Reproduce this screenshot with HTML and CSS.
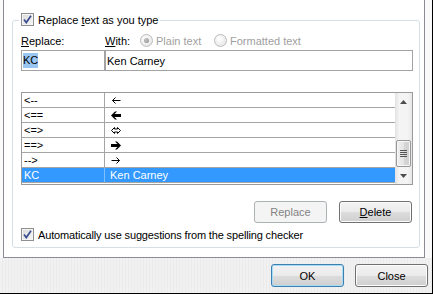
FILE: index.html
```html
<!DOCTYPE html>
<html lang="en">
<head>
  <meta charset="UTF-8">
  <title>AutoCorrect</title>
  <link rel="stylesheet" href="styles.css">
</head>
<body>
<div class="tab-page">
  <div class="group">
    <div class="group-title">
      <span class="check"><svg width="9" height="9" viewBox="0 0 9 9"><path d="M1 4.5L3.3 7.6L8 0.8" fill="none" stroke="#3b4d91" stroke-width="1.7"/></svg></span>
      <span>Replace <u>t</u>ext as you type</span>
    </div>
    <div class="labels">
      <span class="lbl-key"><u>R</u>eplace:</span>
      <span class="lbl-with"><u>W</u>ith:</span>
      <span class="option opt-plain"><span class="radio on"></span>Plain text</span>
      <span class="option"><span class="radio"></span>Formatted text</span>
    </div>
    <div class="fields">
      <div class="field field-key"><span class="sel">KC</span></div>
      <div class="field field-val">Ken Carney</div>
    </div>
    <div class="list">
      <div class="rows">
        <div class="row"><span class="c1">&lt;--</span><span class="c2"><svg width="10" height="9" viewBox="0 0 10 9"><path d="M1.5 4.5H9.5M4.5 1.5L1.5 4.5L4.5 7.5" fill="none" stroke="#000"/></svg></span></div>
        <div class="row"><span class="c1">&lt;==</span><span class="c2"><svg width="10" height="9" viewBox="0 0 10 9"><polygon points="0,4.5 4,0.5 6,0.5 3.5,3 10,3 10,6 3.5,6 6,8.5 4,8.5" fill="#000"/></svg></span></div>
        <div class="row"><span class="c1">&lt;=&gt;</span><span class="c2"><svg width="10" height="9" viewBox="0 0 10 9"><polygon points="0.5,4.5 3.5,1.5 3.5,3 6.5,3 6.5,1.5 9.5,4.5 6.5,7.5 6.5,6 3.5,6 3.5,7.5" fill="#fff" stroke="#000"/></svg></span></div>
        <div class="row"><span class="c1">==&gt;</span><span class="c2"><svg width="10" height="9" viewBox="0 0 10 9"><polygon points="10,4.5 6,0.5 4,0.5 6.5,3 0,3 0,6 6.5,6 4,8.5 6,8.5" fill="#000"/></svg></span></div>
        <div class="row"><span class="c1">--&gt;</span><span class="c2"><svg width="10" height="9" viewBox="0 0 10 9"><path d="M0.5 4.5H8.5M5.5 1.5L8.5 4.5L5.5 7.5" fill="none" stroke="#000"/></svg></span></div>
        <div class="row selected"><span class="c1">KC</span><span class="c2">Ken Carney</span></div>
      </div>
      <div class="scroll">
        <div class="scroll-btn"><svg width="7" height="4" viewBox="0 0 7 4"><polygon points="0,4 3.5,0 7,4" fill="#4d4d4d"/></svg></div>
        <div class="track">
          <div class="thumb"><span></span><span></span><span></span><span></span></div>
        </div>
        <div class="scroll-btn"><svg width="7" height="4" viewBox="0 0 7 4"><polygon points="0,0 3.5,4 7,0" fill="#4d4d4d"/></svg></div>
      </div>
    </div>
    <div class="actions">
      <button class="btn" disabled>Replace</button>
      <button class="btn"><u>D</u>elete</button>
    </div>
    <div class="auto">
      <span class="check"><svg width="9" height="9" viewBox="0 0 9 9"><path d="M1 4.5L3.3 7.6L8 0.8" fill="none" stroke="#3b4d91" stroke-width="1.7"/></svg></span>
      <span class="auto-text">Automatically use su<u>g</u>gestions from the spelling checker</span>
    </div>
  </div>
</div>
<div class="footer">
  <button class="btn default">OK</button>
  <button class="btn">Close</button>
</div>
</body>
</html>
```
FILE: styles.css
```css
body {
	margin: 0;
	width: 433px;
	height: 294px;
	box-sizing: border-box;
	border-right: 1px solid #000;
	border-bottom: 1px solid #000;
	background: #fafafa;
	font: 11px "Liberation Sans", Arial, sans-serif;
	color: #000;
	overflow: hidden;
}
u {
	text-decoration: underline;
	text-underline-offset: 1px;
}
.tab-page {
	margin-left: 3px;
	width: 422px;
	height: 258px;
	box-sizing: border-box;
	border: 1px solid #898c95;
	border-top: none;
	background: #fff;
	padding: 20px 4px 0 8px;
}
.group {
	height: 228px;
	box-sizing: border-box;
	border: 1px solid #d5dfe5;
	border-radius: 3px;
	padding: 0 6px 0 8px;
}
.group-title {
	display: flex;
	align-items: center;
	width: max-content;
	height: 13px;
	margin: -8px 0 0 -2px;
	padding: 0 2px;
	background: #fff;
}
.check {
	display: flex;
	align-items: center;
	justify-content: center;
	width: 13px;
	height: 13px;
	box-sizing: border-box;
	margin-right: 4px;
	border: 1px solid #8f8f8f;
	background: linear-gradient(135deg, #d9d9d9, #f8f8f8);
	box-shadow: inset 0 0 0 1px #f4f4f4;
}
.labels {
	display: flex;
	align-items: center;
	height: 13px;
	margin-top: 8px;
}
.lbl-key {
	width: 84px;
}
.lbl-with {
	width: 35px;
}
.option {
	display: flex;
	align-items: center;
	color: #a0a0a0;
}
.opt-plain {
	width: 74px;
}
.radio {
	position: relative;
	width: 13px;
	height: 13px;
	box-sizing: border-box;
	margin-right: 3px;
	border: 1px solid #bcbcbc;
	border-radius: 50%;
	background: radial-gradient(circle at 40% 35%, #fff, #e0e0e0);
}
.radio.on::after {
	content: "";
	position: absolute;
	left: 3px;
	top: 3px;
	width: 5px;
	height: 5px;
	border-radius: 50%;
	background: radial-gradient(circle at 40% 35%, #c4c4c4, #8c8c8c);
}
.fields {
	display: flex;
	margin-top: 3px;
}
.field {
	display: flex;
	align-items: center;
	height: 21px;
	box-sizing: border-box;
	padding-left: 1px;
	border: 1px solid #a3a3a3;
}
.field-key {
	width: 84px;
}
.field-val {
	width: 308px;
}
.sel {
	line-height: 15px;
	background: #99c6f0;
}
.list {
	display: flex;
	height: 93px;
	box-sizing: border-box;
	margin-top: 21px;
	border: 1px solid #9b9b9b;
}
.rows {
	flex: 1;
}
.row {
	display: flex;
	height: 15px;
	box-sizing: border-box;
	border-bottom: 1px solid #a5a5a5;
	line-height: 14px;
}
.c1 {
	width: 83px;
	box-sizing: border-box;
	padding-left: 2px;
	border-right: 1px solid #a5a5a5;
}
.c2 {
	display: flex;
	align-items: center;
	padding-left: 6px;
}
.row.selected {
	background: #3399ff;
	color: #fff;
}
.row.selected .c1 {
	border-right-color: #80bfff;
}
.row.selected .c2 {
	padding-left: 5px;
}
.scroll {
	display: flex;
	flex-direction: column;
	width: 17px;
	background: linear-gradient(to right, #e2e2e2, #f4f4f4 25%, #f4f4f4 75%, #e6e6e6);
}
.scroll-btn {
	display: flex;
	align-items: center;
	justify-content: center;
	height: 17px;
}
.track {
	flex: 1;
	display: flex;
	flex-direction: column;
	justify-content: flex-end;
	padding: 0 1px;
}
.thumb {
	display: flex;
	flex-direction: column;
	align-items: center;
	justify-content: center;
	gap: 1px;
	height: 27px;
	box-sizing: border-box;
	border: 1px solid #979797;
	border-radius: 2px;
	background: linear-gradient(to right, #f1f1f1, #e4e4e4 50%, #d7d7d7 51%, #cfcfcf);
	box-shadow: inset 0 0 0 1px #f8f8f8;
}
.thumb span {
	width: 7px;
	height: 1px;
	background: #555;
}
.actions {
	display: flex;
	justify-content: flex-end;
	gap: 12px;
	margin-top: 16px;
	padding-right: 1px;
}
.btn {
	width: 73px;
	height: 22px;
	padding: 0;
	border: 1px solid #707070;
	border-radius: 3px;
	background: linear-gradient(#f2f2f2, #ebebeb 50%, #dddddd 50%, #cfcfcf);
	box-shadow: inset 0 0 0 1px #fcfcfc;
	font: 11px "Liberation Sans", Arial, sans-serif;
	color: #000;
}
.btn:disabled {
	border-color: #adb2b5;
	background: #f4f4f4;
	box-shadow: none;
	color: #838383;
}
.btn.default {
	border-color: #3c7fb1;
	box-shadow: inset 0 0 0 1px #a6dcf4;
}
.auto {
	display: flex;
	align-items: center;
	height: 13px;
	margin-top: 5px;
}
.auto-text {
	letter-spacing: -0.15px;
}
.footer {
	display: flex;
	justify-content: flex-end;
	gap: 11px;
	height: 35px;
	box-sizing: border-box;
	padding: 6px 4px 0 0;
	background: repeating-linear-gradient(90deg, #f1f1f1 0, #f1f1f1 2px, #ebebeb 2px, #ebebeb 3px);
}
.footer .btn {
	height: 23px;
}
```
